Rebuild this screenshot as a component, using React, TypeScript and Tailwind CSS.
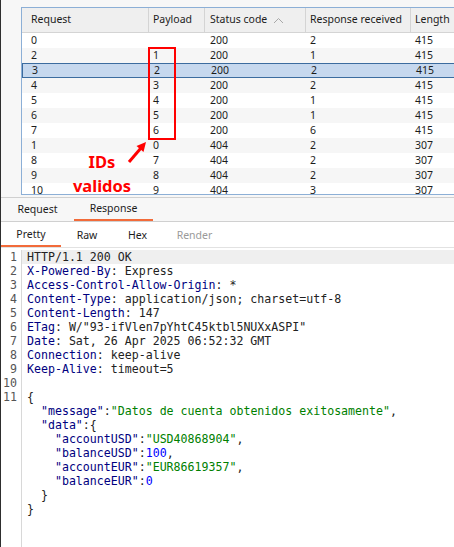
import React from 'react';

type Row = [string, string, string, string, string];

const rows: Row[] = [
  ['0', '', '200', '2', '415'],
  ['2', '1', '200', '1', '415'],
  ['3', '2', '200', '2', '415'],
  ['4', '3', '200', '2', '415'],
  ['5', '4', '200', '1', '415'],
  ['6', '5', '200', '1', '415'],
  ['7', '6', '200', '6', '415'],
  ['1', '0', '404', '2', '307'],
  ['8', '7', '404', '2', '307'],
  ['9', '8', '404', '2', '307'],
  ['10', '9', '404', '3', '307'],
];

const cols = ['w-[127px] pl-[9px]', 'w-[56px] pl-[4px]', 'w-[101px] pl-[5px]', 'w-[105px] pl-[4px]', 'flex-1 pl-[4px]'];

const Name = ({ children }: { children: React.ReactNode }) => <span className="text-[#000080]">{children}</span>;
const Str = ({ children }: { children: React.ReactNode }) => <span className="text-[#008000]">{children}</span>;
const Num = ({ children }: { children: React.ReactNode }) => <span className="text-[#0000ff]">{children}</span>;

const header = (name: string, value: string) => (
  <>
    <Name>{name}</Name>: {value}
  </>
);

const codeLines: React.ReactNode[] = [
  'HTTP/1.1 200 OK',
  header('X-Powered-By', 'Express'),
  header('Access-Control-Allow-Origin', '*'),
  header('Content-Type', 'application/json; charset=utf-8'),
  header('Content-Length', '147'),
  header('ETag', 'W/"93-ifVlen7pYhtC45ktbl5NUXxASPI"'),
  header('Date', 'Sat, 26 Apr 2025 06:52:32 GMT'),
  header('Connection', 'keep-alive'),
  header('Keep-Alive', 'timeout=5'),
  '',
  '{',
  <>
    {'  '}<Name>"message"</Name>:<Str>"Datos de cuenta obtenidos exitosamente"</Str>,
  </>,
  <>
    {'  '}<Name>"data"</Name>:{'{'}
  </>,
  <>
    {'    '}<Name>"accountUSD"</Name>:<Str>"USD40868904"</Str>,
  </>,
  <>
    {'    '}<Name>"balanceUSD"</Name>:<Num>100</Num>,
  </>,
  <>
    {'    '}<Name>"accountEUR"</Name>:<Str>"EUR86619357"</Str>,
  </>,
  <>
    {'    '}<Name>"balanceEUR"</Name>:<Num>0</Num>
  </>,
  '  }',
  '}',
];

export default function App() {
  return (
    <div className="relative w-[454px] h-[547px] overflow-hidden bg-white border-l border-[#2e2e2e] flex flex-col font-['Noto_Sans',sans-serif] text-[10.5px] text-[#1c1c1c]">
      {/* Results table */}
      <div className="h-[197px] shrink-0 bg-[#f7f7f7] pl-[20px] pt-[7px]">
        <div className="h-[188px] border border-r-0 border-[#8cafd6] bg-white overflow-hidden">
          <div className="flex h-[25px] bg-[#efefef] border-b border-[#d4d4d4]">
            {['Request', 'Payload', 'Status code', 'Response received', 'Length'].map((h, i) => (
              <div key={h} className={`${cols[i]} flex items-center ${i < 4 ? 'border-r border-[#d4d4d4]' : ''}`}>
                {h}
                {h === 'Status code' && (
                  <svg width="11" height="7" viewBox="0 0 11 7" className="ml-[6px]">
                    <path d="M1 6 L5.5 1.5 L10 6" fill="none" stroke="#a8a8a8" strokeWidth="1" />
                  </svg>
                )}
              </div>
            ))}
          </div>
          {rows.map((r, idx) => (
            <div
              key={idx}
              className={`flex h-[15px] items-center ${
                idx === 2 ? 'bg-[#c6d8ee] border-y border-l border-[#3c6c9f]' : idx % 2 === 1 ? 'bg-[#f6f6f6]' : 'bg-white'
              }`}
            >
              {r.map((c, i) => (
                <div key={i} className={`${cols[i]} ${idx === 2 && i === 0 ? 'pl-[8px]' : ''}`}>
                  {c}
                </div>
              ))}
            </div>
          ))}
        </div>
      </div>

      {/* Request / Response tabs */}
      <div className="h-[25px] shrink-0 flex bg-[#f7f7f7] border-y border-[#d0d0d0]">
        <div className="w-[73px] flex items-center justify-center">Request</div>
        <div className="w-[79px] flex items-center justify-center border-b-2 border-[#f26b3a]">Response</div>
      </div>

      {/* Pretty / Raw / Hex / Render */}
      <div className="h-[26px] shrink-0 flex border-b border-[#e2e2e2]">
        <div className="w-[60px] flex items-center justify-center border-b-2 border-[#f26b3a] pt-[2px]">Pretty</div>
        <div className="w-[52px] flex items-center justify-center pt-[2px]">Raw</div>
        <div className="w-[49px] flex items-center justify-center pt-[2px]">Hex</div>
        <div className="w-[65px] flex items-center justify-center pt-[2px] text-[#9a9a9a]">Render</div>
      </div>

      {/* Editor */}
      <div className="flex-1 flex pt-[2px] font-['DejaVu_Sans_Mono',monospace] text-[11.6px] leading-[14px]">
        <div className="w-[21px] shrink-0 border-r border-[#d8d8d8] text-right pr-[4px] text-[#555]">
          {Array.from({ length: 11 }, (_, i) => (
            <div key={i} className="h-[14px]">
              {i + 1}
            </div>
          ))}
        </div>
        <div className="flex-1 text-[#222]">
          {codeLines.map((l, i) => (
            <div key={i} className={`h-[14px] pl-[5px] whitespace-pre ${i === 0 ? 'bg-[#efefef]' : ''}`}>
              {l}
            </div>
          ))}
        </div>
      </div>

      {/* Annotation */}
      <div className="absolute left-[147px] top-[47px] w-[28px] h-[93px] border-2 border-[#ff0000]" />
      <svg className="absolute left-[120px] top-[136px]" width="30" height="32" viewBox="0 0 30 32">
        <line x1="8" y1="26" x2="20" y2="12" stroke="#ff0000" strokeWidth="3" />
        <polygon points="25,6 22.5,16 15.5,10" fill="#ff0000" />
      </svg>
      <div className="absolute left-[58px] top-[150px] w-[86px] text-center font-['Noto_Sans',sans-serif] font-bold text-[16.5px] leading-[24px] text-[#ff0000]">
        IDs
        <br />
        validos
      </div>
    </div>
  );
}
